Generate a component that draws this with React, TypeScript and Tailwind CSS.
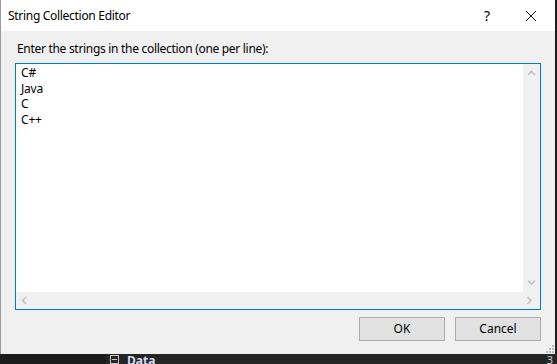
import React from "react"

const font = { fontFamily: '"Noto Sans", "Open Sans", sans-serif' }

const Chevron = ({ dir }: { dir: "up" | "down" | "left" | "right" }) => {
  const pts = {
    up: "1,5 4.5,1.5 8,5",
    down: "1,1.5 4.5,5 8,1.5",
    left: "5,1 1.5,4.5 5,8",
    right: "1.5,1 5,4.5 1.5,8",
  }[dir]
  const vertical = dir === "up" || dir === "down"
  return (
    <svg
      width={vertical ? 9 : 7}
      height={vertical ? 7 : 9}
      viewBox={vertical ? "0 0 9 7" : "0 0 7 9"}
    >
      <polyline points={pts} fill="none" stroke="#c2c2c2" strokeWidth="1.6" />
    </svg>
  )
}

const lines = ["C#", "Java", "C", "C++"]

export default function App() {
  return (
    <div
      className="flex h-[364px] w-[557px] flex-col overflow-hidden bg-[#1e1e1e]"
      style={font}
    >
      <div className="relative flex h-[354px] w-[555px] shrink-0 flex-col border-l border-[#9a9a9a] bg-[#f0f0f0]">
        {/* title bar */}
        <div className="flex h-[31px] items-center bg-white pl-[7px] text-[12px] text-black">
          <span className="tracking-[-0.3px]">String Collection Editor</span>
          <div className="ml-auto flex h-full items-center">
            <span className="mr-[35px] text-[14px] leading-none">?</span>
            <svg width="12" height="12" viewBox="0 0 12 12" className="mr-[18px]">
              <path d="M1 1 L11 11 M11 1 L1 11" stroke="#111" strokeWidth="1" />
            </svg>
          </div>
        </div>

        {/* body */}
        <div className="flex flex-1 flex-col pl-[14px] pr-[14px]">
          <p className="mt-[10px] h-[16px] pl-[2px] text-[12px] leading-[16px] tracking-[-0.3px] text-black">
            Enter the strings in the collection (one per line):
          </p>
          <div className="mt-[6px] flex h-[247px] w-[526px] flex-col border border-[#0078d7] bg-white">
            <div className="flex flex-1">
              <div className="flex-1 pl-[5px] pt-[1px] text-[12px] leading-[15.6px] tracking-[-0.2px] text-black">
                {lines.map((l) => (
                  <div key={l}>{l}</div>
                ))}
              </div>
              <div className="flex w-[17px] flex-col items-center justify-between bg-[#f0f0f0] py-[6px]">
                <Chevron dir="up" />
                <Chevron dir="down" />
              </div>
            </div>
            <div className="flex h-[17px] items-center bg-[#f0f0f0]">
              <div className="flex w-[523px] items-center justify-between pl-[5px] pr-[6px]">
                <Chevron dir="left" />
                <Chevron dir="right" />
              </div>
            </div>
          </div>

          <div className="mt-[7px] flex justify-end gap-[10px]">
            <button className="h-[24px] w-[86px] border border-[#adadad] bg-[#e1e1e1] text-[12px] text-black">
              OK
            </button>
            <button className="h-[24px] w-[86px] border border-[#adadad] bg-[#e1e1e1] text-[12px] text-black">
              Cancel
            </button>
          </div>
        </div>

        {/* resize grip */}
        <svg width="9" height="9" viewBox="0 0 9 9" className="absolute bottom-[1px] right-[1px]">
          {[
            [7, 1],
            [4, 4],
            [7, 4],
            [1, 7],
            [4, 7],
            [7, 7],
          ].map(([x, y]) => (
            <rect key={`${x}-${y}`} x={x} y={y} width="2" height="2" fill="#b8b8b8" />
          ))}
        </svg>
      </div>

      {/* strip of the window behind */}
      <div className="flex flex-1 items-start">
        <div className="w-[106px] self-stretch bg-[#1b1b1c]" />
        <div className="flex flex-1 items-start self-stretch bg-[#252526] pl-[4px] pt-[1px]">
          <span className="flex h-[9px] w-[9px] items-center justify-center border border-[#c8c8c8]">
            <span className="h-px w-[5px] bg-[#c8c8c8]" />
          </span>
          <span className="ml-[8px] text-[12px] font-bold leading-[11px] text-[#d4dcf0]">Data</span>
          <span className="ml-auto mr-[4px] text-[11px] leading-[10px] text-[#d0d0d0]">3</span>
        </div>
      </div>
    </div>
  )
}
